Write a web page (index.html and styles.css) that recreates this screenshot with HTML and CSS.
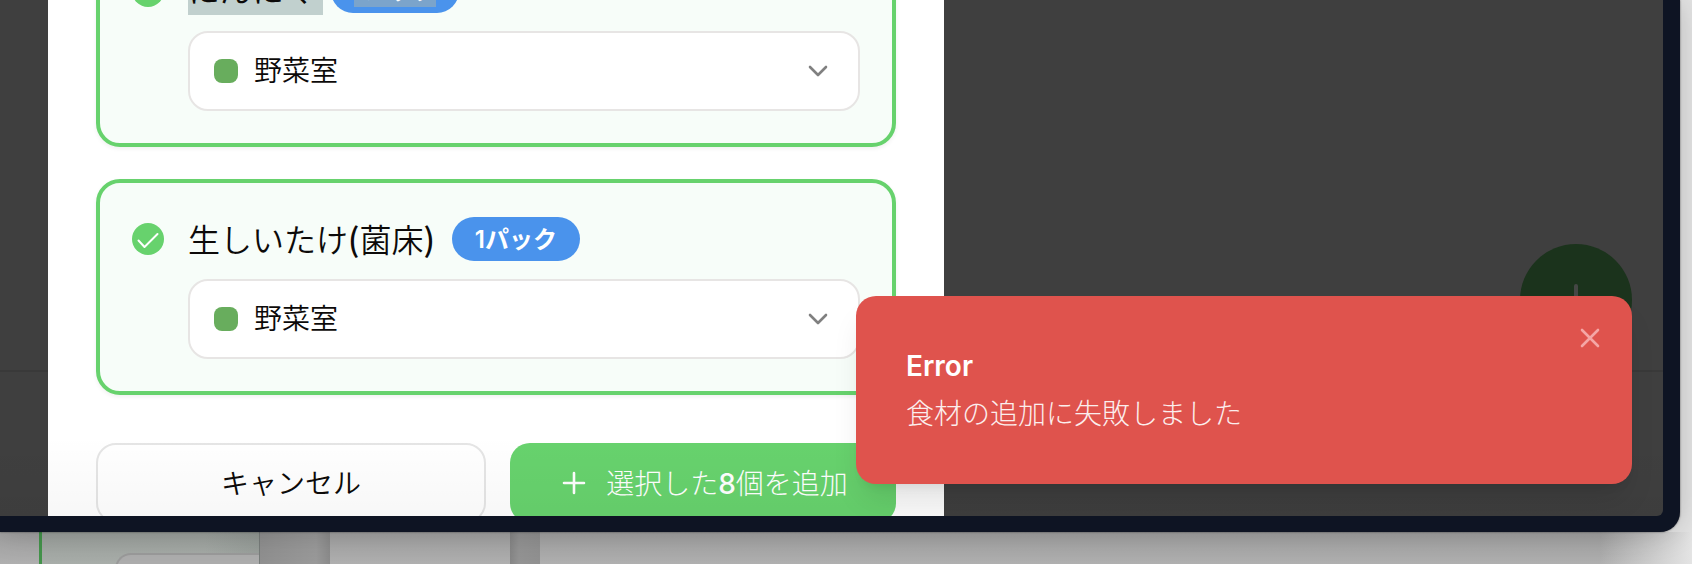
FILE: index.html
```html
<!DOCTYPE html>
<html lang="ja">
<head>
<meta charset="utf-8">
<title>食材の追加</title>
<link rel="stylesheet" href="styles.css">
</head>
<body>
<div class="desktop">
  <div class="backdrop">
    <div class="strip strip-edge"></div>
    <div class="strip strip-mint"><div class="ghost-field"></div></div>
    <div class="strip strip-gap"></div>
    <div class="strip strip-panel"></div>
    <div class="strip strip-gutter"></div>
    <div class="strip strip-wide"></div>
  </div>
  <div class="window">
    <div class="screen">
      <div class="rule"></div>
      <div class="fab"><svg width="48" height="48" viewBox="0 0 24 24"><path d="M12 5v14M5 12h14"/></svg></div>
      <main class="modal">
        <section class="card">
          <div class="check"><svg viewBox="0 0 32 32"><path d="M6.500 17.500l6 6.500L25.500 11"/></svg></div>
          <div class="body">
            <div class="head"><span class="name"><mark>にんにく</mark></span><span class="pill"><mark>1パック</mark></span></div>
            <div class="select"><i class="swatch"></i><span class="value">野菜室</span><svg class="chev" width="20" height="12" viewBox="0 0 20 12"><path d="M2 2l8 8 8-8"/></svg></div>
          </div>
        </section>
        <section class="card">
          <div class="check"><svg viewBox="0 0 32 32"><path d="M6.500 17.500l6 6.500L25.500 11"/></svg></div>
          <div class="body">
            <div class="head"><span class="name">生しいたけ<b>(</b>菌床<b>)</b></span><span class="pill">1パック</span></div>
            <div class="select"><i class="swatch"></i><span class="value">野菜室</span><svg class="chev" width="20" height="12" viewBox="0 0 20 12"><path d="M2 2l8 8 8-8"/></svg></div>
          </div>
        </section>
        <div class="actions">
          <button class="btn cancel">キャンセル</button>
          <button class="btn add"><svg width="24" height="24" viewBox="0 0 24 24"><path d="M12 2v20M2 12h20"/></svg><span>選択した<b>8</b>個を追加</span></button>
        </div>
      </main>
      <div class="shade"></div>
      <aside class="toast">
        <strong>Error</strong>
        <p>食材の追加に失敗しました</p>
        <svg class="close" width="20" height="20" viewBox="0 0 20 20"><path d="M2 2l16 16M18 2L2 18"/></svg>
      </aside>
    </div>
  </div>
</div>
</body>
</html>
```

FILE: styles.css
```css
* { box-sizing: border-box; }
body {
  margin: 0;
  font-family: Inter, "Noto Sans CJK JP", sans-serif;
  font-size: 28px;
  font-weight: 350;
  color: #0c0a09;
}
.desktop { position: relative; width: 1692px; height: 564px; overflow: hidden; background: #e4e4e4; }
svg { display: block; fill: none; stroke: currentColor; stroke-linecap: round; stroke-linejoin: round; }

/* Windows stacked behind the front one */
.backdrop { position: absolute; inset: 532px 0 0 0; display: flex; }
.strip { height: 32px; background: linear-gradient(#a1a1a1, #afafaf); }
.strip-edge { width: 39px; }
.strip-mint { width: 221px; padding: 21px 0 0 73px; border-left: 3px solid #43934a; border-right: 1px solid #777c7a; background: linear-gradient(90deg, transparent 75%, rgba(120, 130, 125, .25)), linear-gradient(#9ba09c, #a8ada9); }
.ghost-field { height: 30px; border: 2px solid #999; border-width: 2px 0 0 2px; border-radius: 16px 0 0 0; background: #acacac; }
.strip-gap { width: 70px; background: linear-gradient(90deg, #8f8f8f, #999 80%, #8a8a8a); }
.strip-panel { width: 180px; }
.strip-gutter { width: 30px; background: linear-gradient(90deg, #858585, #939393 30%, #909090); }
.strip-wide { flex: 1; background: linear-gradient(90deg, transparent 92%, #e4e4e4), linear-gradient(#a1a1a1, #afafaf); }

/* Front window */
.window {
  position: absolute;
  inset: 0 auto auto 0;
  width: 1680px;
  height: 532px;
  padding: 0 17px 16px 0;
  background: #0e1423;
  border-radius: 0 0 20px 0;
  box-shadow: 0 0 2px rgba(0, 0, 0, .6), 0 0 30px rgba(0, 0, 0, .2);
}
.screen { position: relative; height: 516px; padding-left: 48px; overflow: hidden; background: #3f3f3f; border-radius: 0 0 6px 0; }
.rule { position: absolute; top: 370px; left: 0; right: 0; height: 2px; background: #393939; }
.fab {
  position: absolute;
  top: 244px;
  right: 31px;
  width: 112px;
  height: 112px;
  display: grid;
  place-items: center;
  border-radius: 50%;
  background: #1b331c;
  color: #454745;
}
.fab svg { stroke-width: 2; }

.modal { position: relative; width: 896px; height: 600px; margin-top: -69px; padding: 0 48px; background: #fff; display: flex; flex-direction: column; gap: 32px; }
.card {
  height: 216px;
  flex: none;
  display: flex;
  gap: 24px;
  padding: 32px;
  border: 4px solid #67d26d;
  border-radius: 24px;
  background: #f7fdf9;
  box-shadow: 0 2px 4px rgba(0, 0, 0, .06);
}
.check { width: 32px; height: 32px; margin-top: 8px; border-radius: 50%; background: #67d26d; color: #fff; }
.check svg { stroke-width: 2; }
.body { flex: 1; }
.head { display: flex; align-items: center; gap: 16px; height: 48px; margin-bottom: 16px; font-size: 32px; }
.name { line-height: 48px; white-space: nowrap; }
.name b { font-family: "Noto Sans CJK JP", sans-serif; font-weight: 500; }
.name b:last-child { margin-right: 1px; }
.pill { width: 128px; height: 44px; display: flex; justify-content: center; border-radius: 22px; background: #4a93ec; color: #fff; font-size: 24px; font-weight: 600; line-height: 44px; padding-top: 1px; }
mark { display: block; color: inherit; background: #c1d0ce; }
.name mark { padding-right: 8px; margin-right: -8px; }
.pill mark { height: 32px; line-height: 32px; margin-top: 5px; background: #7ba4cb; }
.select { display: flex; align-items: center; height: 80px; padding: 0 30px 0 24px; border: 2px solid #e7e5e4; border-radius: 20px; background: #fff; }
.swatch { width: 24px; height: 24px; margin-right: 16px; border-radius: 8px; background: #68ad5d; }
.value { padding-bottom: 4px; }
.chev { margin-left: auto; color: #808080; stroke-width: 2.6; }

.actions { display: flex; gap: 24px; margin-top: 16px; }
.btn { height: 80px; border-radius: 20px; font: inherit; padding: 0 0 2px; }
.cancel { width: 390px; border: 2px solid #e5e5e5; background: #fff; color: inherit; }
.add { flex: 1; display: flex; align-items: center; justify-content: center; gap: 20px; border: 0; background: #67d26d; color: #fff; font-weight: 300; padding-left: 4px; }
.add svg { stroke-width: 2.6; margin-top: 2px; }
.add b { font-weight: 500; }

/* Soft darkening along the lower edge, below the toast */
.shade { position: absolute; inset: 436px 0 0 0; background: linear-gradient(transparent, rgba(0, 0, 0, .03)); }

.toast {
  position: absolute;
  top: 296px;
  left: 856px;
  width: 776px;
  height: 188px;
  padding: 50px;
  border-radius: 20px;
  background: #df534d;
  color: #fff;
  box-shadow: 0 20px 30px -6px rgba(0, 0, 0, .1), 0 8px 12px -8px rgba(0, 0, 0, .1);
}
.toast strong { display: block; font-weight: 600; line-height: 40px; }
.toast p { margin: 8px 0 0; line-height: 40px; font-weight: 300; opacity: .9; }
.close { position: absolute; top: 32px; right: 32px; color: #f4a6a5; stroke-width: 2.6; }
```
